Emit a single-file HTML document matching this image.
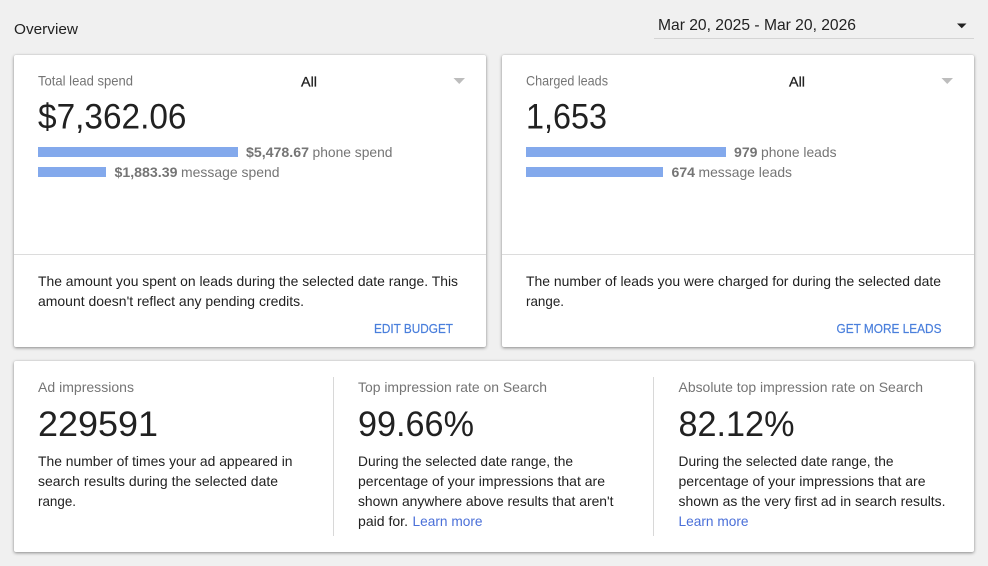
<!DOCTYPE html>
<html lang="en"><head><meta charset="utf-8"><title>Overview</title>
<style>
html,body{margin:0;padding:0;width:988px;height:566px;overflow:hidden;background:#f0f0f0}
.card{position:absolute;background:#fff;border-radius:2px;box-shadow:0 1px 3px rgba(0,0,0,.42),0 0 1px rgba(0,0,0,.12)}
svg{position:absolute;left:0;top:0;filter:blur(.25px)}
text{font-family:"Liberation Sans",sans-serif;font-size:14px;fill:#212121}
.l{font-size:13.8px;fill:#757575}
.big{font-size:35px;fill:#212121}
.g{fill:#757575}
.b{fill:#757575;font-weight:bold}
.a{fill:#212121;font-size:14px;stroke:#212121;stroke-width:.3px}
.btn{font-size:12.5px;fill:#4a7fdc;stroke:#4a7fdc;stroke-width:.2px}
.lk{fill:#4a6fd8}
</style></head><body>
<div class="card" style="left:14px;top:55px;width:472px;height:292px"></div>
<div class="card" style="left:502px;top:55px;width:472px;height:292px"></div>
<div class="card" style="left:14px;top:361px;width:960px;height:191px"></div>
<svg width="988" height="566" viewBox="0 0 988 566" xmlns="http://www.w3.org/2000/svg">
<text x="14" y="34" style="font-size:15px" textLength="64" lengthAdjust="spacingAndGlyphs">Overview</text>
<text x="658" y="30" style="font-size:16px" textLength="198" lengthAdjust="spacingAndGlyphs">Mar 20, 2025 - Mar 20, 2026</text>
<rect x="654" y="38" width="320" height="1" fill="#d4d4d4"/>
<path d="M957 23.5h9.5l-4.75 4.75z" fill="#212121"/>

<text class="l" x="38" y="85.5" textLength="95" lengthAdjust="spacingAndGlyphs">Total lead spend</text>
<text class="a" x="301" y="86.5" textLength="16" lengthAdjust="spacingAndGlyphs">All</text>
<path d="M453.5 78h11.5l-5.75 6z" fill="#bdbdbd"/>
<text class="big" x="38" y="128.5" textLength="148.5" lengthAdjust="spacingAndGlyphs">$7,362.06</text>
<rect x="38" y="147" width="200" height="10" fill="#83a9ec"/>
<rect x="38" y="167" width="68" height="10" fill="#83a9ec"/>
<text class="b" x="246" y="157" textLength="63" lengthAdjust="spacingAndGlyphs">$5,478.67</text>
<text class="g" x="312.5" y="157" textLength="80" lengthAdjust="spacingAndGlyphs">phone spend</text>
<text class="b" x="114.5" y="177" textLength="63" lengthAdjust="spacingAndGlyphs">$1,883.39</text>
<text class="g" x="181" y="177" textLength="98.5" lengthAdjust="spacingAndGlyphs">message spend</text>
<rect x="14" y="254" width="472" height="1" fill="#dcdcdc"/>
<text x="38" y="286" textLength="420" lengthAdjust="spacingAndGlyphs">The amount you spent on leads during the selected date range. This</text>
<text x="38" y="306" textLength="266" lengthAdjust="spacingAndGlyphs">amount doesn't reflect any pending credits.</text>
<text class="btn" x="374" y="333" textLength="79" lengthAdjust="spacingAndGlyphs">EDIT BUDGET</text>

<text class="l" x="526" y="85.5" textLength="82" lengthAdjust="spacingAndGlyphs">Charged leads</text>
<text class="a" x="789" y="86.5" textLength="16" lengthAdjust="spacingAndGlyphs">All</text>
<path d="M941.5 78h11.5l-5.75 6z" fill="#bdbdbd"/>
<text class="big" x="526" y="128.5" textLength="81" lengthAdjust="spacingAndGlyphs">1,653</text>
<rect x="526" y="147" width="200" height="10" fill="#83a9ec"/>
<rect x="526" y="167" width="137" height="10" fill="#83a9ec"/>
<text class="b" x="734" y="157" textLength="23.5" lengthAdjust="spacingAndGlyphs">979</text>
<text class="g" x="761" y="157" textLength="75.5" lengthAdjust="spacingAndGlyphs">phone leads</text>
<text class="b" x="671.5" y="177" textLength="23.5" lengthAdjust="spacingAndGlyphs">674</text>
<text class="g" x="698.5" y="177" textLength="93.5" lengthAdjust="spacingAndGlyphs">message leads</text>
<rect x="502" y="254" width="472" height="1" fill="#dcdcdc"/>
<text x="526" y="286" textLength="415" lengthAdjust="spacingAndGlyphs">The number of leads you were charged for during the selected date</text>
<text x="526" y="306" textLength="38" lengthAdjust="spacingAndGlyphs">range.</text>
<text class="btn" x="836.5" y="333" textLength="105" lengthAdjust="spacingAndGlyphs">GET MORE LEADS</text>

<rect x="333" y="377" width="1" height="159" fill="#d8d8d8"/>
<rect x="653" y="377" width="1" height="159" fill="#d8d8d8"/>
<text class="l" x="38" y="392" textLength="96" lengthAdjust="spacingAndGlyphs">Ad impressions</text>
<text class="l" x="358" y="392" textLength="189" lengthAdjust="spacingAndGlyphs">Top impression rate on Search</text>
<text class="l" x="678.5" y="392" textLength="244.5" lengthAdjust="spacingAndGlyphs">Absolute top impression rate on Search</text>
<text class="big" x="38" y="436" textLength="120" lengthAdjust="spacingAndGlyphs">229591</text>
<text class="big" x="358" y="436" textLength="116" lengthAdjust="spacingAndGlyphs">99.66%</text>
<text class="big" x="678.5" y="436" textLength="116" lengthAdjust="spacingAndGlyphs">82.12%</text>

<text x="38" y="466" textLength="254.5" lengthAdjust="spacingAndGlyphs">The number of times your ad appeared in</text>
<text x="38" y="486" textLength="240" lengthAdjust="spacingAndGlyphs">search results during the selected date</text>
<text x="38" y="506" textLength="38" lengthAdjust="spacingAndGlyphs">range.</text>

<text x="358" y="466" textLength="215" lengthAdjust="spacingAndGlyphs">During the selected date range, the</text>
<text x="358" y="486" textLength="247" lengthAdjust="spacingAndGlyphs">percentage of your impressions that are</text>
<text x="358" y="506" textLength="255.5" lengthAdjust="spacingAndGlyphs">shown anywhere above results that aren't</text>
<text x="358" y="526" textLength="50" lengthAdjust="spacingAndGlyphs">paid for.</text>
<text class="lk" x="412.5" y="526" textLength="70" lengthAdjust="spacingAndGlyphs">Learn more</text>

<text x="678.5" y="466" textLength="215" lengthAdjust="spacingAndGlyphs">During the selected date range, the</text>
<text x="678.5" y="486" textLength="247" lengthAdjust="spacingAndGlyphs">percentage of your impressions that are</text>
<text x="678.5" y="506" textLength="267" lengthAdjust="spacingAndGlyphs">shown as the very first ad in search results.</text>
<text class="lk" x="678.5" y="526" textLength="70" lengthAdjust="spacingAndGlyphs">Learn more</text>
</svg>
</body></html>
